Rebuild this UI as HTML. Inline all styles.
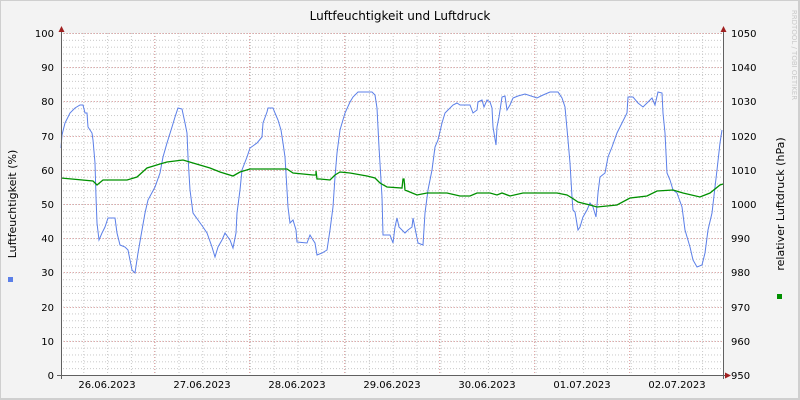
<!DOCTYPE html>
<html><head><meta charset="utf-8"><style>
html,body{margin:0;padding:0;}
body{width:800px;height:400px;overflow:hidden;background:#f3f3f3;font-family:"DejaVu Sans","Liberation Sans",sans-serif;}
</style></head><body>
<svg width="800" height="400" xmlns="http://www.w3.org/2000/svg" style="display:block">
<defs>
<pattern id="ph" x="0" y="33" width="800" height="6.84" patternUnits="userSpaceOnUse">
<line x1="0" y1="0.5" x2="800" y2="0.5" stroke="#c8c8c8" stroke-width="1" stroke-dasharray="1,2"/>
</pattern>
<pattern id="pv" x="11.9" y="0" width="23.8" height="400" patternUnits="userSpaceOnUse">
<line x1="0.5" y1="0" x2="0.5" y2="400" stroke="#c8c8c8" stroke-width="1" stroke-dasharray="1,2"/>
</pattern>
</defs>
<rect x="0.5" y="0.5" width="799" height="399" fill="#f3f3f3" stroke="#cfcfcf"/>
<rect x="1" y="398" width="799" height="2" fill="#cfcfcf"/>
<rect x="798" y="1" width="2" height="399" fill="#cfcfcf"/>
<rect x="61" y="33" width="662" height="342" fill="#fff"/>
<rect x="61" y="33" width="662" height="342" fill="url(#ph)"/>
<rect x="61" y="33" width="662" height="342" fill="url(#pv)"/>
<g stroke="#e3a8a8" stroke-width="1" stroke-dasharray="1,2">
<line x1="61" x2="723" y1="33.5" y2="33.5"/><line x1="61" x2="723" y1="67.5" y2="67.5"/><line x1="61" x2="723" y1="101.5" y2="101.5"/><line x1="61" x2="723" y1="136.5" y2="136.5"/><line x1="61" x2="723" y1="170.5" y2="170.5"/><line x1="61" x2="723" y1="204.5" y2="204.5"/><line x1="61" x2="723" y1="238.5" y2="238.5"/><line x1="61" x2="723" y1="272.5" y2="272.5"/><line x1="61" x2="723" y1="307.5" y2="307.5"/><line x1="61" x2="723" y1="341.5" y2="341.5"/>
<line y1="33" y2="375" x1="154.5" x2="154.5"/><line y1="33" y2="375" x1="249.5" x2="249.5"/><line y1="33" y2="375" x1="344.5" x2="344.5"/><line y1="33" y2="375" x1="439.5" x2="439.5"/><line y1="33" y2="375" x1="534.5" x2="534.5"/><line y1="33" y2="375" x1="629.5" x2="629.5"/>
</g>
<polyline fill="none" stroke="#5b7fe8" stroke-width="1" points="61,148 62,135 65,123 70,113 75,108 80,105 83,105 85,113 87,113 88,127 92,133 93,140 95,163 96,197 97,223 99,240 102,233 105,227 108,218 115,218 117,233 120,245 125,247 128,250 132,270 135,273 138,253 142,230 145,213 148,200 155,187 160,173 163,157 167,143 172,127 175,117 178,108 182,109 185,123 187,133 188,157 190,190 193,213 198,220 203,227 207,233 212,247 215,257 218,247 222,240 225,233 230,240 233,248 236,233 237,213 240,190 242,170 247,157 250,148 257,143 262,137 263,123 267,112 268,108 273,108 275,113 278,120 281,130 283,143 285,157 288,207 290,223 293,220 296,230 297,242 307,243 310,235 313,240 315,243 317,255 322,253 327,250 330,230 333,207 335,177 337,153 340,130 345,113 350,102 353,97 358,92 372,92 375,95 377,108 379,147 382,197 383,235 390,235 393,243 395,227 397,218 399,227 405,233 408,230 412,227 413,218 416,233 418,243 423,245 425,213 428,190 432,170 435,147 438,140 442,123 445,113 448,110 453,105 457,103 460,105 470,105 473,113 477,110 478,102 482,100 484,107 487,100 490,102 492,108 493,127 496,145 497,127 499,117 502,97 505,96 507,110 510,105 513,98 518,96 525,94 537,98 543,95 550,92 558,92 562,98 565,107 568,140 570,163 572,197 573,210 575,212 578,230 580,227 583,217 587,210 590,203 593,207 596,217 598,193 600,177 605,173 608,157 612,147 617,133 622,123 627,113 628,97 633,97 638,103 643,107 647,103 652,98 655,105 658,92 662,93 663,113 665,133 667,173 670,180 673,190 677,193 682,207 685,230 690,247 693,260 697,267 702,265 705,253 708,230 712,213 715,187 717,170 720,143 722,130"/>
<polyline fill="none" stroke="#009000" stroke-width="1.3" points="61,178 93,181 97,185 103,180 127,180 137,177 147,168 160,164 167,162 183,160 193,163 210,168 220,172 233,176 240,172 250,169 287,169 293,173 313,175 316,175 316,171 317,179 320,179 330,180 335,175 340,172 350,173 367,176 375,178 380,183 387,187 402,188 403,179 404,179 405,190 417,195 427,193 447,193 460,196 470,196 477,193 490,193 497,195 502,193 510,196 523,193 557,193 567,195 572,198 578,202 590,205 597,207 617,205 630,198 647,196 657,191 673,190 683,193 700,197 710,193 720,185 723,184"/>
<g stroke="#606060" stroke-width="1">
<line x1="61.5" y1="30" x2="61.5" y2="379"/>
<line x1="723.5" y1="30" x2="723.5" y2="379"/>
<line x1="57" y1="375.5" x2="727" y2="375.5"/>
</g>
<g fill="#a02020">
<polygon points="58.5,32 64.5,32 61.5,26"/>
<polygon points="720.5,32 726.5,32 723.5,26"/>
<polygon points="725,372.5 725,378.5 731,375.5"/>
</g>
<g font-size="10" fill="#000" text-anchor="end">
<text x="54" y="37">100</text><text x="54" y="71">90</text><text x="54" y="105">80</text><text x="54" y="140">70</text><text x="54" y="174">60</text><text x="54" y="208">50</text><text x="54" y="242">40</text><text x="54" y="276">30</text><text x="54" y="311">20</text><text x="54" y="345">10</text><text x="54" y="379">0</text>
</g>
<g font-size="10" fill="#000">
<text x="731" y="37">1050</text><text x="731" y="71">1040</text><text x="731" y="105">1030</text><text x="731" y="140">1020</text><text x="731" y="174">1010</text><text x="731" y="208">1000</text><text x="731" y="242">990</text><text x="731" y="276">980</text><text x="731" y="311">970</text><text x="731" y="345">960</text><text x="731" y="379">950</text>
</g>
<g font-size="10" fill="#000" text-anchor="middle">
<text x="107" y="388">26.06.2023</text><text x="202" y="388">27.06.2023</text><text x="297" y="388">28.06.2023</text><text x="392" y="388">29.06.2023</text><text x="487" y="388">30.06.2023</text><text x="582" y="388">01.07.2023</text><text x="677" y="388">02.07.2023</text>
</g>
<text x="400" y="20" font-size="12" text-anchor="middle" fill="#000">Luftfeuchtigkeit und Luftdruck</text>
<text transform="translate(16,204) rotate(-90)" font-size="11" text-anchor="middle" fill="#000">Luftfeuchtigkeit (%)</text>
<text transform="translate(784,204) rotate(-90)" font-size="11" text-anchor="middle" fill="#000">relativer Luftdruck (hPa)</text>
<text transform="translate(792,55) rotate(90)" font-size="7" text-anchor="middle" fill="#c8c8c8">RRDTOOL / TOBI OETIKER</text>
<rect x="8" y="277" width="5" height="5" fill="#5b7fe8"/>
<rect x="777" y="294" width="5" height="5" fill="#009000"/>
</svg>
</body></html>
